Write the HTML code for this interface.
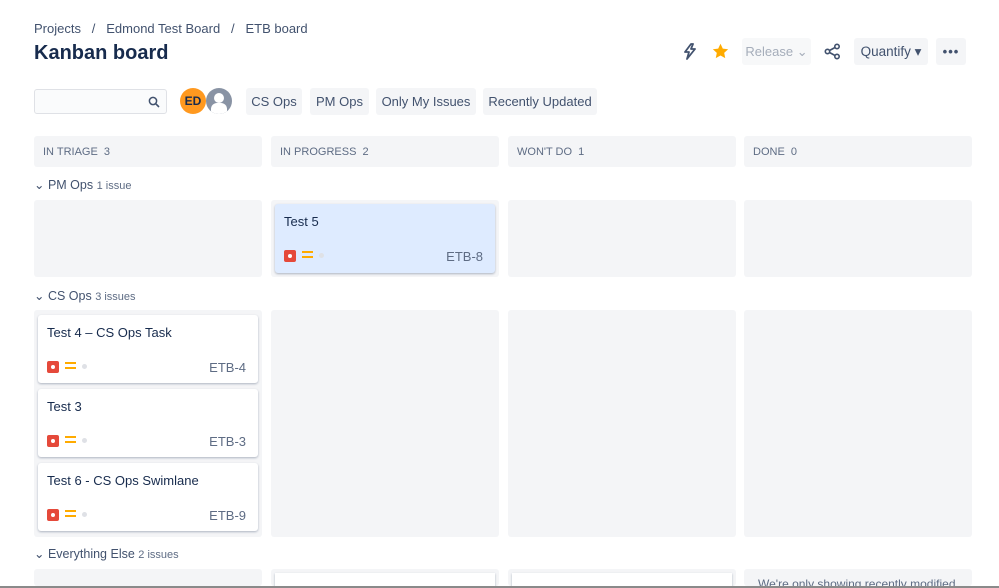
<!DOCTYPE html><html style="overflow:hidden;height:588px"><head><style>
body{margin:0;width:999px;height:588px;overflow:hidden;background:#fff;font-family:"Liberation Sans",sans-serif;color:#172b4d;position:relative}
.a{position:absolute}
.crumb{left:34px;top:21px;font-size:13px;color:#42526e}
h1{position:absolute;left:34px;top:42px;margin:0;font-size:20px;font-weight:bold;color:#172b4d}
.btn{position:absolute;background:#f4f5f7;border-radius:3px;font-size:13px;color:#42526e;height:27px;line-height:27px;text-align:center}
.col{position:absolute;background:#f4f5f7;border-radius:3px;width:228px;overflow:hidden}
.hd{height:31px;top:136px;font-size:11px;color:#5e6c84;line-height:33px;text-indent:9px}
.lane{position:absolute;left:34px;font-size:12.5px;color:#42526e}
.lane small{font-size:11px;color:#5e6c84}
.card{position:absolute;background:#fff;border-radius:3px;box-shadow:0 1px 2px rgba(9,30,66,.3);width:220px;height:68px;font-size:13px}
.card .t{position:absolute;left:9px;top:10px}
.card .k{position:absolute;right:12px;top:45px;color:#5e6c84;font-size:13px}
.ic{position:absolute;left:9px;top:46px;width:12px;height:12px;background:#e5493a;border-radius:2px}
.ic:after{content:"";position:absolute;left:4px;top:4px;width:4px;height:4px;border-radius:50%;background:#fff}
.pr{position:absolute;left:27px;top:47px;width:11px;border-top:2px solid #ffab00;border-bottom:2px solid #ffab00;height:3px}
.dt{position:absolute;left:44px;top:49px;width:5px;height:5px;border-radius:50%;background:#dfe1e6}
</style></head><body>
<div class="a crumb">Projects &nbsp;&nbsp;/&nbsp;&nbsp; Edmond Test Board &nbsp;&nbsp;/&nbsp;&nbsp; ETB board</div>
<h1>Kanban board</h1>
<svg class="a" style="left:682px;top:43px" width="16" height="17" viewBox="0 0 16 17"><path d="M9 1 L3 9 H7 L5 16 L13 6 H9 L11 1 Z" fill="none" stroke="#42526e" stroke-width="1.8" stroke-linejoin="round"/></svg>
<svg class="a" style="left:712px;top:43px" width="17" height="16" viewBox="0 0 24 23"><path d="M12 1l3.3 7 7.7.9-5.7 5.3 1.5 7.6L12 18l-6.8 3.8 1.5-7.6L1 8.9 8.7 8z" fill="#ffab00"/></svg>
<div class="btn" style="left:742px;top:38px;width:69px;color:#a5adba;background:#f7f8f9">Release ⌄</div>
<svg class="a" style="left:824px;top:43px" width="17" height="17" viewBox="0 0 17 17"><g fill="none" stroke="#42526e" stroke-width="1.6"><circle cx="13" cy="3.5" r="2.2"/><circle cx="3.5" cy="8.5" r="2.2"/><circle cx="13" cy="13.5" r="2.2"/><path d="M5.5 7.5 11 4.5M5.5 9.5 11 12.5"/></g></svg>
<div class="btn" style="left:854px;top:38px;width:74px;color:#42526e;font-size:13.5px">Quantify ▾</div>
<div class="btn" style="left:936px;top:38px;width:30px;font-weight:bold;letter-spacing:1px">•••</div>
<div class="a" style="left:34px;top:89px;width:131px;height:23px;border:1px solid #dfe1e6;border-radius:3px;background:#fafbfc"></div>
<svg class="a" style="left:148px;top:96px" width="12" height="12" viewBox="0 0 12 12"><circle cx="5" cy="5" r="3.6" fill="none" stroke="#42526e" stroke-width="1.5"/><path d="M7.6 7.6 11 11" stroke="#42526e" stroke-width="1.6"/></svg>
<div class="a" style="left:180px;top:88px;width:26px;height:26px;border-radius:50%;background:#ff991f;font-size:12px;font-weight:bold;line-height:26px;text-align:center;color:#172b4d">ED</div>
<div class="a" style="left:206px;top:88px;width:26px;height:26px;border-radius:50%;background:#8993a4;overflow:hidden"><div class="a" style="left:8px;top:5px;width:10px;height:10px;border-radius:50%;background:#fff"></div><div class="a" style="left:5px;top:15px;width:16px;height:12px;border-radius:6px 6px 0 0;background:#fff"></div></div>
<div class="btn" style="left:246px;top:88px;width:56px">CS Ops</div>
<div class="btn" style="left:310px;top:88px;width:59px">PM Ops</div>
<div class="btn" style="left:376px;top:88px;width:100px">Only My Issues</div>
<div class="btn" style="left:483px;top:88px;width:114px">Recently Updated</div>
<div class="col hd" style="left:34px">IN TRIAGE &nbsp;3</div>
<div class="col hd" style="left:271px">IN PROGRESS &nbsp;2</div>
<div class="col hd" style="left:508px">WON'T DO &nbsp;1</div>
<div class="col hd" style="left:744px">DONE &nbsp;0</div>
<div class="lane" style="top:177px">⌄ PM Ops <small>1 issue</small></div>
<div class="col" style="left:34px;top:200px;height:77px"></div>
<div class="col" style="left:271px;top:200px;height:77px"></div>
<div class="col" style="left:508px;top:200px;height:77px"></div>
<div class="col" style="left:744px;top:200px;height:77px"></div>
<div class="card" style="left:275px;top:204px;background:#deebff;height:69px"><div class="t">Test 5</div><div class="ic"></div><div class="pr"></div><div class="dt"></div><div class="k">ETB-8</div></div>
<div class="lane" style="top:288px">⌄ CS Ops <small>3 issues</small></div>
<div class="col" style="left:34px;top:310px;height:227px"></div>
<div class="col" style="left:271px;top:310px;height:227px"></div>
<div class="col" style="left:508px;top:310px;height:227px"></div>
<div class="col" style="left:744px;top:310px;height:227px"></div>
<div class="card" style="left:38px;top:315px"><div class="t">Test 4 – CS Ops Task</div><div class="ic"></div><div class="pr"></div><div class="dt"></div><div class="k">ETB-4</div></div>
<div class="card" style="left:38px;top:389px"><div class="t">Test 3</div><div class="ic"></div><div class="pr"></div><div class="dt"></div><div class="k">ETB-3</div></div>
<div class="card" style="left:38px;top:463px"><div class="t">Test 6 - CS Ops Swimlane</div><div class="ic"></div><div class="pr"></div><div class="dt"></div><div class="k">ETB-9</div></div>
<div class="lane" style="top:546px">⌄ Everything Else <small>2 issues</small></div>
<div class="col" style="left:34px;top:569px;height:17px"></div>
<div class="col" style="left:271px;top:569px;height:17px"><div class="a" style="left:4px;top:4px;width:220px;height:30px;background:#fff;box-shadow:0 1px 2px rgba(9,30,66,.3)"></div></div>
<div class="col" style="left:508px;top:569px;height:17px"><div class="a" style="left:4px;top:4px;width:220px;height:30px;background:#fff;box-shadow:0 1px 2px rgba(9,30,66,.3)"></div></div>
<div class="col" style="left:744px;top:569px;height:17px;font-size:12px;color:#5e6c84;text-indent:14px;line-height:30px">We're only showing recently modified</div>
<div class="a" style="left:0;top:586px;width:999px;height:2px;background:#8a8a8a"></div>
</body></html>
